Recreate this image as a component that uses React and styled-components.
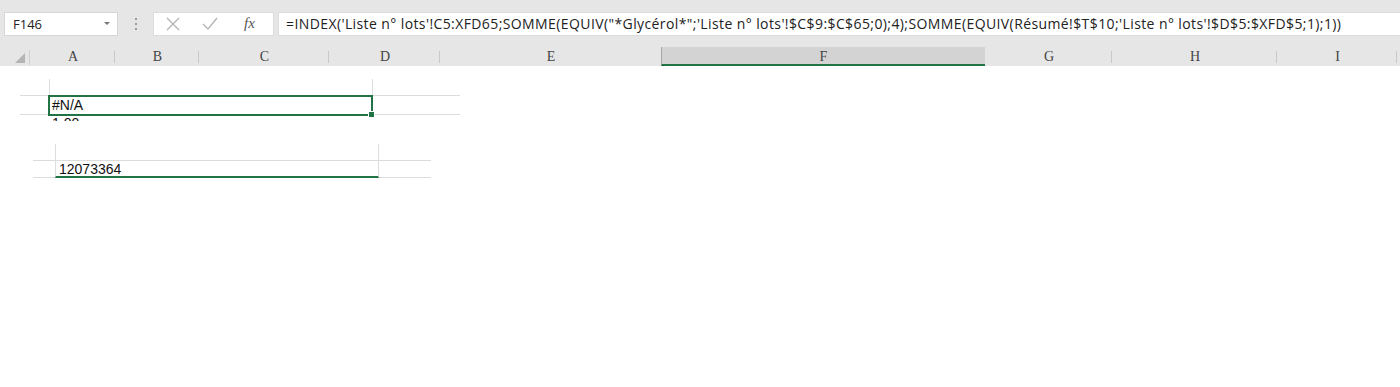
import styled, { createGlobalStyle } from 'styled-components';

const GlobalStyle = createGlobalStyle`
    body {
        margin: 0;
        background: #ffffff;
        font-family: 'Liberation Sans', Arial, sans-serif;
    }
`;

const Window = styled.div`
    width: 1400px;
    height: 387px;
    overflow: hidden;
    background: #ffffff;
`;

const FormulaBar = styled.div`
    height: 47px;
    background: #e6e6e6;
    display: flex;
    align-items: center;
    padding-left: 4px;
    box-sizing: border-box;
`;

const NameBox = styled.div`
    width: 114px;
    height: 24px;
    box-sizing: border-box;
    background: #ffffff;
    border: 1px solid #d6d6d6;
    display: flex;
    align-items: center;
    justify-content: space-between;
    padding: 0 7px 0 8px;
    font-family: 'Open Sans', 'Noto Sans', sans-serif;
    font-size: 13px;
    color: #222222;
`;

const Arrow = styled.span`
    width: 0;
    height: 0;
    border-left: 3px solid transparent;
    border-right: 3px solid transparent;
    border-top: 3px solid #777777;
`;

const Grip = styled.div`
    width: 35px;
    display: flex;
    flex-direction: column;
    align-items: center;
    gap: 3px;
`;

const Dot = styled.span`
    width: 2px;
    height: 2px;
    background: #9a9a9a;
`;

const FuncBox = styled.div`
    width: 121px;
    height: 24px;
    box-sizing: border-box;
    background: #ffffff;
    border: 1px solid #dcdcdc;
    display: flex;
    align-items: center;
    padding-left: 12px;
    gap: 22px;
`;

const Fx = styled.span`
    font-family: 'Liberation Serif', 'Times New Roman', serif;
    font-style: italic;
    font-size: 15px;
    color: #555555;
    margin-left: 4px;
`;

const FormulaInput = styled.div`
    flex: 1;
    height: 24px;
    margin-left: 4px;
    box-sizing: border-box;
    background: #ffffff;
    border: 1px solid #dcdcdc;
    border-right: none;
    display: flex;
    align-items: center;
    padding-left: 7px;
    font-family: 'Open Sans', 'Noto Sans', sans-serif;
    font-size: 14px;
    letter-spacing: 0.4px;
    color: #222222;
    white-space: nowrap;
`;

const HeaderRow = styled.div`
    height: 19px;
    display: flex;
    background: #e6e6e6;
`;

const ColHead = styled.div`
    width: ${p => p.$w}px;
    flex: none;
    box-sizing: border-box;
    position: relative;
    display: flex;
    align-items: center;
    justify-content: center;
    font-family: 'Liberation Serif', 'Times New Roman', serif;
    font-size: 14px;
    color: #444444;
    background: ${p => (p.$active ? '#d3d3d3' : '#e6e6e6')};
    border-bottom: 2px solid ${p => (p.$active ? '#217346' : '#e6e6e6')};
    border-left: 1px solid ${p => (p.$active ? '#a8a8a8' : 'transparent')};
    padding-top: 2px;

    &::after {
        content: '';
        position: absolute;
        right: 0;
        top: 4px;
        bottom: 1px;
        width: 1px;
        background: ${p => (p.$sep ? '#c8c8c8' : 'transparent')};
    }
`;

const Corner = styled.div`
    width: 30px;
    flex: none;
    position: relative;
    border-right: 1px solid #cfcfcf;
    box-sizing: border-box;
    margin: 3px 0 1px;

    &::before {
        content: '';
        position: absolute;
        right: 4px;
        bottom: 2px;
        border-left: 10px solid transparent;
        border-bottom: 10px solid #b4b4b4;
    }
`;

const Sheet = styled.div`
    padding-top: 13px;
`;

const Fragment = styled.div`
    margin-left: ${p => p.$x}px;
    margin-top: ${p => p.$top || 0}px;
    width: ${p => p.$w}px;
`;

const Stub = styled.div`
    margin-left: ${p => p.$x}px;
    width: ${p => p.$w}px;
    height: ${p => p.$h}px;
    box-sizing: border-box;
    border-left: 1px solid #dedede;
    border-right: 1px solid #dedede;
`;

const GridRow = styled.div`
    height: ${p => p.$h}px;
    box-sizing: border-box;
    border-top: 1px solid #dcdcdc;
    border-bottom: 1px solid #dcdcdc;
`;

const SelectedCell = styled.div`
    position: relative;
    margin-left: ${p => p.$x}px;
    margin-top: -1px;
    width: ${p => p.$w}px;
    height: 21px;
    box-sizing: border-box;
    border: 2px solid #217346;
    padding-left: 2px;
    font-size: 14px;
    line-height: 17px;
    color: #111111;

    &::after {
        content: '';
        position: absolute;
        right: -4px;
        bottom: -4px;
        width: 5px;
        height: 5px;
        background: #217346;
        border: 1px solid #ffffff;
    }
`;

const ClipText = styled.div`
    margin-left: ${p => p.$x}px;
    height: 5px;
    overflow: hidden;
    font-size: 14px;
    line-height: 14px;
    color: #111111;
    padding-top: 1px;
`;

const ValueCell = styled.div`
    margin-left: ${p => p.$x}px;
    width: ${p => p.$w}px;
    height: 17px;
    margin-bottom: -1px;
    box-sizing: border-box;
    border-left: 1px solid #dedede;
    border-right: 1px solid #dedede;
    border-bottom: 2px solid #217346;
    padding-left: 3px;
    font-size: 14px;
    line-height: 16px;
    color: #111111;
`;

const columns = [
    { n: 'A', w: 85 },
    { n: 'B', w: 84 },
    { n: 'C', w: 130 },
    { n: 'D', w: 111 },
    { n: 'E', w: 221 },
    { n: 'F', w: 324, active: true },
    { n: 'G', w: 127 },
    { n: 'H', w: 165 },
    { n: 'I', w: 120 },
];

const formula =
    "=INDEX('Liste n° lots'!C5:XFD65;SOMME(EQUIV(\"*Glycérol*\";'Liste n° lots'!$C$9:$C$65;0);4);SOMME(EQUIV(Résumé!$T$10;'Liste n° lots'!$D$5:$XFD$5;1);1))";

const App = () => {
    return (
        <Window>
            <GlobalStyle />
            <FormulaBar>
                <NameBox>
                    F146
                    <Arrow />
                </NameBox>
                <Grip>
                    <Dot />
                    <Dot />
                    <Dot />
                </Grip>
                <FuncBox>
                    <svg width="14" height="14" viewBox="0 0 14 14">
                        <path d="M1 1 L13 13 M13 1 L1 13" stroke="#b5b5b5" strokeWidth="1.4" fill="none" />
                    </svg>
                    <svg width="16" height="14" viewBox="0 0 16 14">
                        <path d="M1 7 L6 12 L15 1" stroke="#b5b5b5" strokeWidth="1.4" fill="none" />
                    </svg>
                    <Fx>fx</Fx>
                </FuncBox>
                <FormulaInput>{formula}</FormulaInput>
            </FormulaBar>
            <HeaderRow>
                <Corner />
                {columns.map((c, i) => (
                    <ColHead key={c.n} $w={c.w} $active={c.active} $sep={!c.active && !columns[i + 1]?.active}>
                        {c.n}
                    </ColHead>
                ))}
            </HeaderRow>
            <Sheet>
                <Fragment $x={20} $w={440}>
                    <Stub $x={29} $w={324} $h={16} />
                    <GridRow $h={20}>
                        <SelectedCell $x={28} $w={325}>
                            #N/A
                        </SelectedCell>
                    </GridRow>
                    <ClipText $x={32}>1,00</ClipText>
                </Fragment>
                <Fragment $x={33} $w={398} $top={23}>
                    <Stub $x={22} $w={324} $h={16} />
                    <GridRow $h={18}>
                        <ValueCell $x={22} $w={324}>
                            12073364
                        </ValueCell>
                    </GridRow>
                </Fragment>
            </Sheet>
        </Window>
    );
};

export default App;
